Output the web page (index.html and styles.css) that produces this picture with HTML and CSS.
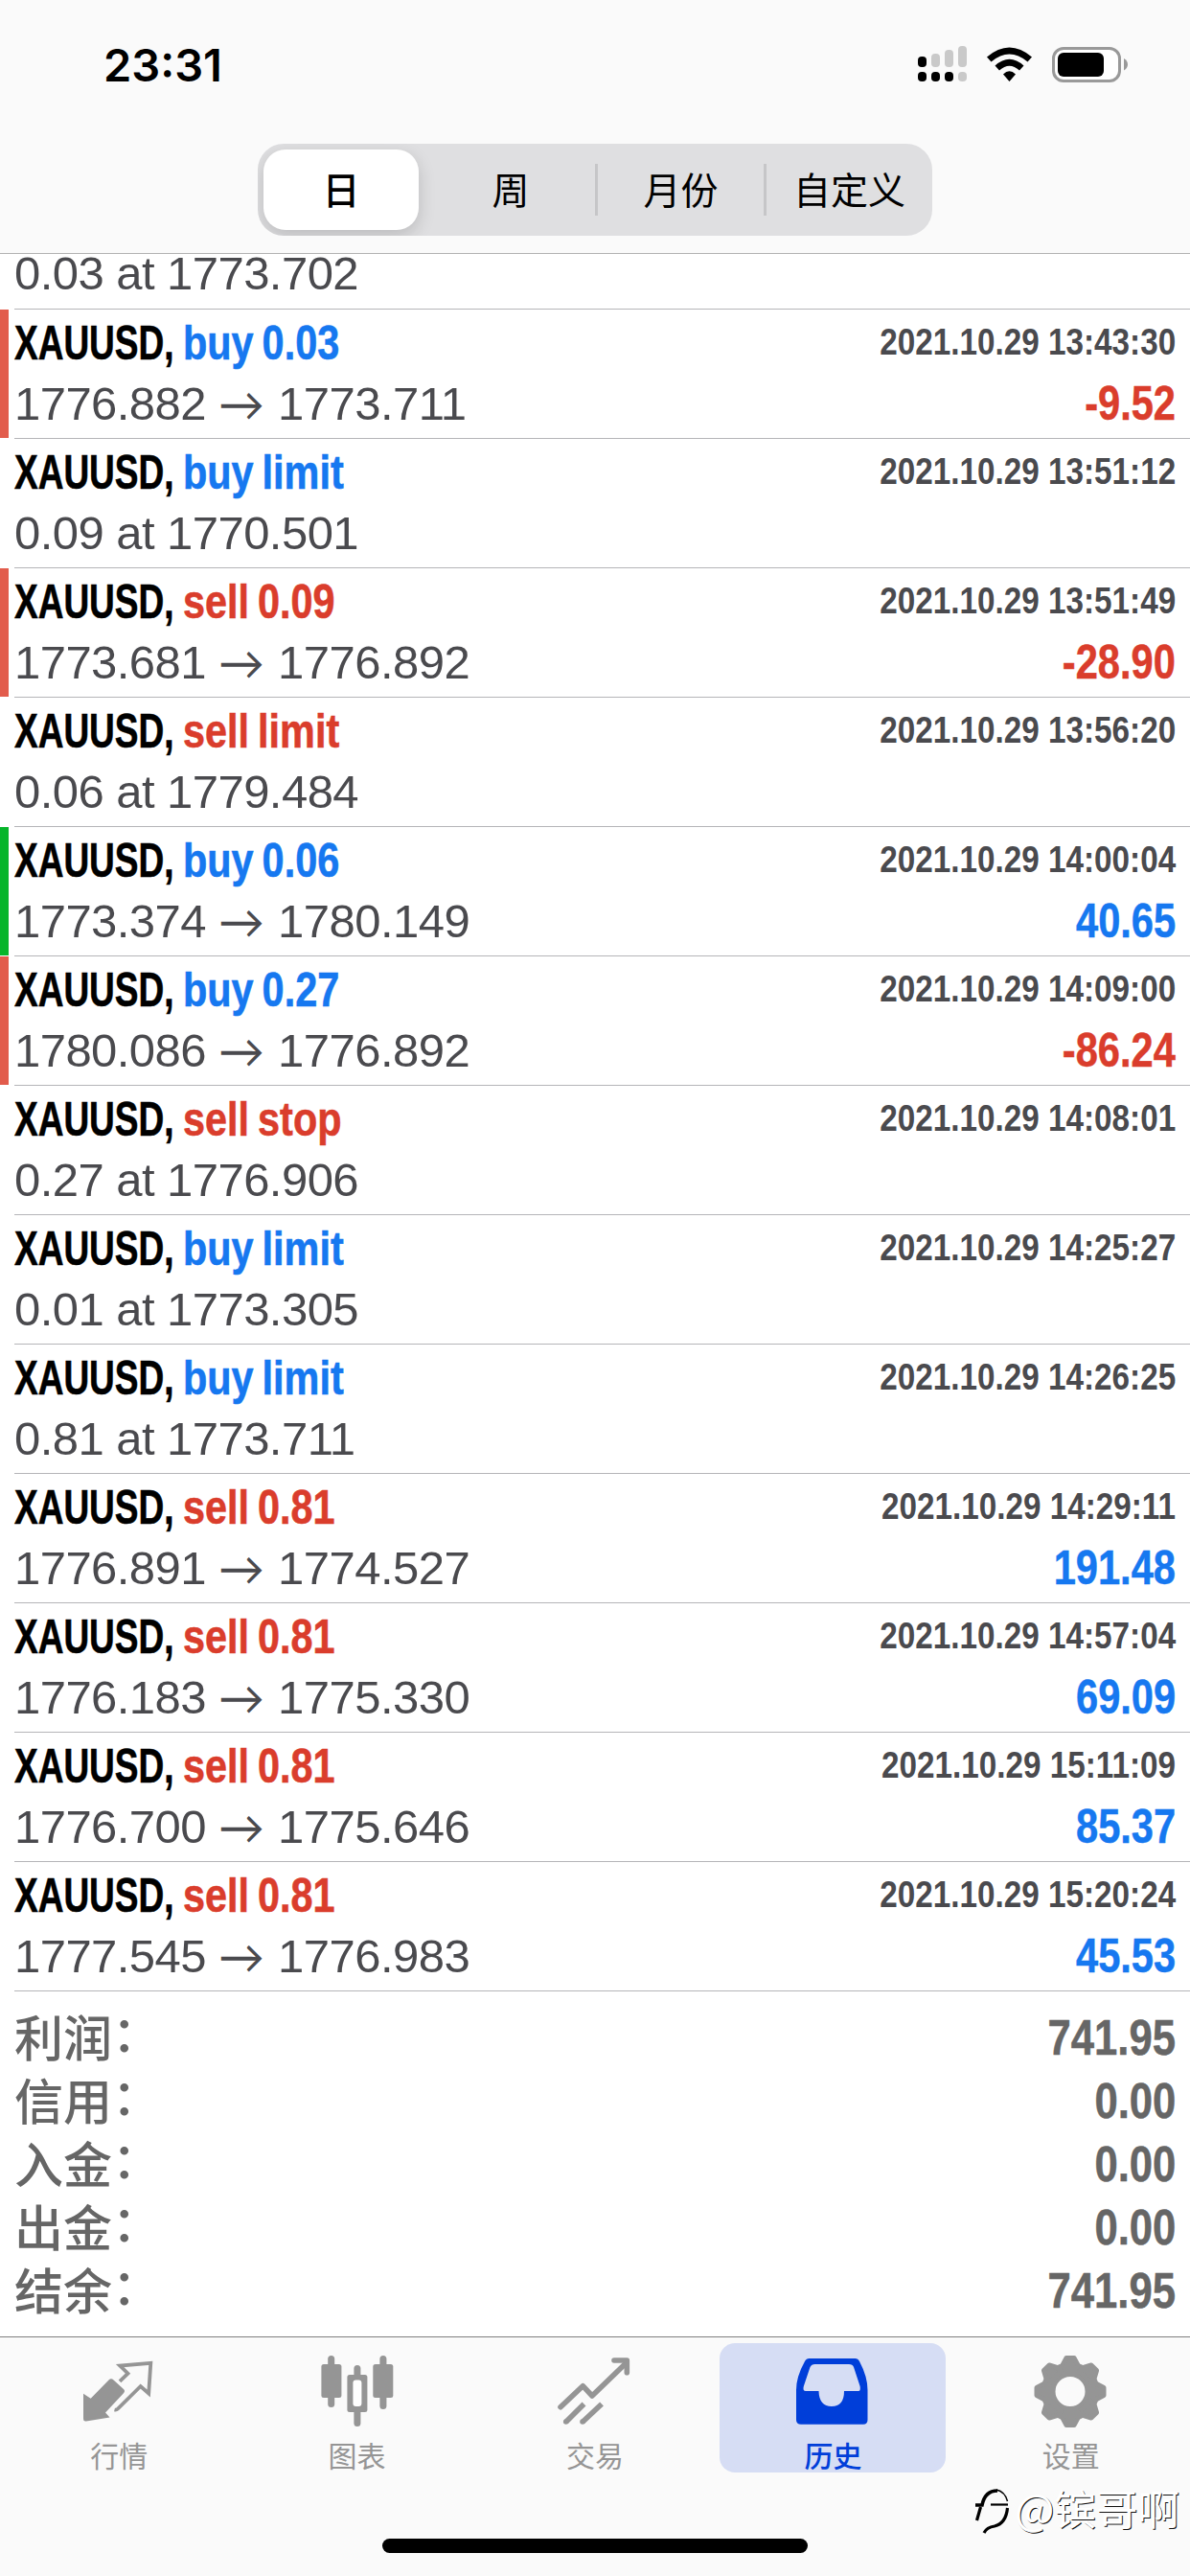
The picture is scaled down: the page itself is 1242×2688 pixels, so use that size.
FILE: index.html
```html
<!DOCTYPE html>
<html lang="zh-CN">
<head>
<meta charset="utf-8">
<title>历史</title>
<link rel="stylesheet" href="styles.css">
</head>
<body>
<div class="screen">
  <header class="header">
    <div class="status">
      <span class="clock">23:31</span>
      <svg class="status-icons" width="224" height="44" viewBox="956 45 224 44">
        <g fill="#c9c9c9">
          <rect x="972" y="56" width="9" height="14" rx="4"/>
          <rect x="986" y="52" width="9" height="18" rx="4"/>
          <rect x="1000" y="48" width="9" height="22" rx="4"/>
          <rect x="1000" y="75" width="9" height="10" rx="4"/>
        </g>
        <rect x="958" y="59" width="9" height="11" rx="4"/>
        <rect x="958" y="75" width="9" height="10" rx="4"/>
        <rect x="972" y="75" width="9" height="10" rx="4"/>
        <rect x="986" y="75" width="9" height="10" rx="4"/>
        <path d="M1030 59.500Q1053.500 39.500 1077 59.500L1072.500 64.500Q1053.500 48.500 1034.500 64.500Z"/>
        <path d="M1038.500 68.500Q1053.500 55 1068.500 68.500L1064 73.500Q1053.500 64 1043 73.500Z"/>
        <path d="M1047 77.500Q1053.500 71 1060 77.500L1053.500 85Z"/>
        <rect x="1099.500" y="50.500" width="69" height="34" rx="10.500" fill="#fff" stroke="#999" stroke-width="3"/>
        <rect x="1104" y="55" width="48" height="25" rx="6"/>
        <path d="M1173 61Q1177 63.500 1177 67.300T1173 73.500Z" fill="#999"/>
      </svg>
    </div>
    <nav class="segments">
      <span class="segment segment-on">日</span>
      <span class="segment">周</span>
      <span class="segment divided">月份</span>
      <span class="segment divided">自定义</span>
    </nav>
  </header>

  <main class="deals">
    <div class="deal clipped"><i class="mark"></i><div class="body">
      <div class="line"><span class="price">0.03 at 1773.702</span></div></div></div>
    <div class="deal"><i class="mark loss"></i><div class="body">
      <div class="line head"><b class="symbol">XAUUSD,</b><b class="side buy">buy 0.03</b><b class="time">2021.10.29 13:43:30</b></div>
      <div class="line"><span class="price">1776.882 <span class="arrow">→</span> 1773.711</span><b class="amount neg">-9.52</b></div></div></div>
    <div class="deal"><i class="mark"></i><div class="body">
      <div class="line head"><b class="symbol">XAUUSD,</b><b class="side buy">buy limit</b><b class="time">2021.10.29 13:51:12</b></div>
      <div class="line"><span class="price">0.09 at 1770.501</span></div></div></div>
    <div class="deal"><i class="mark loss"></i><div class="body">
      <div class="line head"><b class="symbol">XAUUSD,</b><b class="side sell">sell 0.09</b><b class="time">2021.10.29 13:51:49</b></div>
      <div class="line"><span class="price">1773.681 <span class="arrow">→</span> 1776.892</span><b class="amount neg">-28.90</b></div></div></div>
    <div class="deal"><i class="mark"></i><div class="body">
      <div class="line head"><b class="symbol">XAUUSD,</b><b class="side sell">sell limit</b><b class="time">2021.10.29 13:56:20</b></div>
      <div class="line"><span class="price">0.06 at 1779.484</span></div></div></div>
    <div class="deal"><i class="mark gain"></i><div class="body">
      <div class="line head"><b class="symbol">XAUUSD,</b><b class="side buy">buy 0.06</b><b class="time">2021.10.29 14:00:04</b></div>
      <div class="line"><span class="price">1773.374 <span class="arrow">→</span> 1780.149</span><b class="amount pos">40.65</b></div></div></div>
    <div class="deal"><i class="mark loss"></i><div class="body">
      <div class="line head"><b class="symbol">XAUUSD,</b><b class="side buy">buy 0.27</b><b class="time">2021.10.29 14:09:00</b></div>
      <div class="line"><span class="price">1780.086 <span class="arrow">→</span> 1776.892</span><b class="amount neg">-86.24</b></div></div></div>
    <div class="deal"><i class="mark"></i><div class="body">
      <div class="line head"><b class="symbol">XAUUSD,</b><b class="side sell">sell stop</b><b class="time">2021.10.29 14:08:01</b></div>
      <div class="line"><span class="price">0.27 at 1776.906</span></div></div></div>
    <div class="deal"><i class="mark"></i><div class="body">
      <div class="line head"><b class="symbol">XAUUSD,</b><b class="side buy">buy limit</b><b class="time">2021.10.29 14:25:27</b></div>
      <div class="line"><span class="price">0.01 at 1773.305</span></div></div></div>
    <div class="deal"><i class="mark"></i><div class="body">
      <div class="line head"><b class="symbol">XAUUSD,</b><b class="side buy">buy limit</b><b class="time">2021.10.29 14:26:25</b></div>
      <div class="line"><span class="price">0.81 at 1773.711</span></div></div></div>
    <div class="deal"><i class="mark"></i><div class="body">
      <div class="line head"><b class="symbol">XAUUSD,</b><b class="side sell">sell 0.81</b><b class="time">2021.10.29 14:29:11</b></div>
      <div class="line"><span class="price">1776.891 <span class="arrow">→</span> 1774.527</span><b class="amount pos">191.48</b></div></div></div>
    <div class="deal"><i class="mark"></i><div class="body">
      <div class="line head"><b class="symbol">XAUUSD,</b><b class="side sell">sell 0.81</b><b class="time">2021.10.29 14:57:04</b></div>
      <div class="line"><span class="price">1776.183 <span class="arrow">→</span> 1775.330</span><b class="amount pos">69.09</b></div></div></div>
    <div class="deal"><i class="mark"></i><div class="body">
      <div class="line head"><b class="symbol">XAUUSD,</b><b class="side sell">sell 0.81</b><b class="time">2021.10.29 15:11:09</b></div>
      <div class="line"><span class="price">1776.700 <span class="arrow">→</span> 1775.646</span><b class="amount pos">85.37</b></div></div></div>
    <div class="deal"><i class="mark"></i><div class="body">
      <div class="line head"><b class="symbol">XAUUSD,</b><b class="side sell">sell 0.81</b><b class="time">2021.10.29 15:20:24</b></div>
      <div class="line"><span class="price">1777.545 <span class="arrow">→</span> 1776.983</span><b class="amount pos">45.53</b></div></div></div>
  </main>

  <section class="summary">
    <div class="total"><span>利润</span><span class="colon">：</span><b class="amount">741.95</b></div>
    <div class="total"><span>信用</span><span class="colon">：</span><b class="amount">0.00</b></div>
    <div class="total"><span>入金</span><span class="colon">：</span><b class="amount">0.00</b></div>
    <div class="total"><span>出金</span><span class="colon">：</span><b class="amount">0.00</b></div>
    <div class="total"><span>结余</span><span class="colon">：</span><b class="amount">741.95</b></div>
  </section>

  <footer class="footer">
    <nav class="tabs">
      <div class="tab">
        <svg width="78" height="78" viewBox="0 0 78 78">
          <path fill="currentColor" d="M2 41.700L9.700 46.700L28.500 27.500Q31 25 33.500 27.500L44 37Q46 39 44 41.200L25 61.500L29.500 66.500L5 70.500Q2 71 2 68Z"/>
          <path fill="none" stroke="currentColor" stroke-width="3.800" d="M40 28.800L48.500 20.700L40.200 12.600L72.300 9.900L70.200 41.500L61.700 34L38 57.500Q36.500 59 34.500 58.500"/>
        </svg>
        <span>行情</span>
      </div>
      <div class="tab">
        <svg width="78" height="78" viewBox="0 0 78 78" fill="currentColor">
          <rect x="8.200" y="2" width="7" height="54" rx="3.500"/><rect x="1.400" y="11" width="21" height="35" rx="2.500"/>
          <rect x="35.400" y="12" width="7" height="64" rx="3.500"/><rect x="28.400" y="22" width="21" height="39" rx="2.500"/>
          <rect x="62.400" y="2" width="7" height="56" rx="3.500"/><rect x="55.300" y="11" width="21" height="35" rx="2.500"/>
          <rect x="34.400" y="27.500" width="9" height="27.500" rx="3" fill="#fff"/>
        </svg>
        <span>图表</span>
      </div>
      <div class="tab">
        <svg width="78" height="78" viewBox="0 0 78 78" fill="none" stroke="currentColor" stroke-width="5.600">
          <path stroke-linecap="round" stroke-linejoin="round" d="M3 55.700L26.300 33.700L36 44L72 9.300"/>
          <path stroke-linecap="round" stroke-linejoin="round" d="M59 7H72.300V19.700"/>
          <path d="M8.700 71.300L27.500 52.500M26 71.300L46 52.500"/>
          <circle cx="8.700" cy="71" r="2.800" fill="currentColor" stroke="none"/><circle cx="26" cy="71" r="2.800" fill="currentColor" stroke="none"/>
        </svg>
        <span>交易</span>
      </div>
      <div class="tab tab-on">
        <svg width="78" height="78" viewBox="-1 0 78 78">
          <path fill="currentColor" fill-rule="evenodd" d="M17 5H61.500Q64.500 5 66 8Q74.500 24 74.500 38V69Q74.500 73.700 70 73.700H5Q0 73.700 0 69V38Q0 24 9 8Q10.500 5 13.500 5ZM19.500 11Q16 11 14.500 14L7.800 34Q6.500 39 10 39H23.500Q24 55 37 55Q50 55 50 39H65Q67.500 39 66.600 34L60 14Q59 11 55 11Z"/>
        </svg>
        <span>历史</span>
      </div>
      <div class="tab">
        <svg width="78" height="78" viewBox="0 0 78 78">
          <circle cx="38" cy="39.500" r="23" fill="none" stroke="currentColor" stroke-width="15"/>
          <g fill="currentColor" stroke="currentColor" stroke-width="5" stroke-linejoin="round">
            <path id="tooth" d="M34 4.500H42L46 12V18H30V12Z"/>
            <use href="#tooth" transform="rotate(45 38 39.500)"/><use href="#tooth" transform="rotate(90 38 39.500)"/>
            <use href="#tooth" transform="rotate(135 38 39.500)"/><use href="#tooth" transform="rotate(180 38 39.500)"/>
            <use href="#tooth" transform="rotate(225 38 39.500)"/><use href="#tooth" transform="rotate(270 38 39.500)"/>
            <use href="#tooth" transform="rotate(315 38 39.500)"/>
          </g>
        </svg>
        <span>设置</span>
      </div>
    </nav>
    <div class="home-indicator"></div>
  </footer>

  <div class="watermark">
    <svg width="40" height="52" viewBox="0 0 40 52" fill="none" stroke="#000" stroke-linecap="butt">
      <path stroke-width="3.600" d="M1 19H8Q11 4 24 4"/><path stroke-width="1.500" d="M23 3Q32 5 34.500 15"/>
      <path stroke-width="2.200" d="M17 18.500H35"/>
      <path stroke-width="3.200" d="M6.500 21L2.500 35M34.500 22Q33 38 21 41Q13 42 10 48"/>
    </svg>
    <span>@镔哥啊</span>
  </div>
</div>
</body>
</html>
```
FILE: styles.css
```css
* { box-sizing: border-box; }

body {
  margin: 0;
  background: #fff;
  font-family: "Liberation Sans", "Noto Sans CJK SC", sans-serif;
}

.screen {
  position: relative;
  display: flex;
  flex-direction: column;
  width: 1242px;
  height: 2688px;
  overflow: hidden;
}

/* Status bar and period selector */
.header {
  height: 265px;
  background: #fafafa;
  border-bottom: 1px solid #b2b2b2;
}

.status {
  display: flex;
  justify-content: space-between;
  height: 150px;
  padding: 45px 62px 0 108px;
}

.clock {
  font: 600 47px/46px Inter, sans-serif;
  color: #000;
}

.segments {
  display: grid;
  grid-template-columns: repeat(4, 1fr);
  width: 704px;
  height: 96px;
  margin: 0 auto;
  background: #dfdfe1;
  border-radius: 27px;
  overflow: hidden;
}

.segment {
  display: flex;
  align-items: center;
  justify-content: center;
  height: 54px;
  margin-top: 21px;
  padding-bottom: 4px;
  font: 400 39px/50px "Noto Sans CJK SC", sans-serif;
  color: #000;
}

.segment-on {
  height: 84px;
  margin: 6px 8px 6px 6px;
  background: #fff;
  border-radius: 23px;
  box-shadow: 0 6px 18px rgba(0, 0, 0, .16);
  font-weight: 500;
}

.divided { border-left: 3px solid #c6c6c8; }

/* Deal list */
.deal {
  display: flex;
  gap: 6px;
  height: 135px;
}

.mark { width: 9px; margin-bottom: 1px; }
.loss { background: #e25c4c; }
.gain { background: #06b52a; }

.body {
  flex: 1;
  padding: 4px 15px 0 0;
  border-bottom: 1px solid #b5b5b8;
}

.clipped { height: 58px; }
.clipped .body {
  display: flex;
  flex-direction: column;
  justify-content: flex-end;
  padding-bottom: 6px;
}

.line {
  display: flex;
  height: 62px;
  line-height: 62px;
  white-space: nowrap;
}

.head {
  height: 63px;
  line-height: 63px;
}

.clipped .line { flex: none; }

.symbol, .side {
  font-size: 50px;
  transform-origin: left;
  -webkit-text-stroke: .6px currentColor;
}

.symbol {
  width: 176px;
  transform: scaleX(.74);
}

.side {
  word-spacing: -3px;
  transform: scaleX(.828);
}

.buy, .pos { color: #1678f0; }
.sell, .neg { color: #da3d2c; }

.time {
  margin-left: auto;
  font-size: 39px;
  line-height: 60px;
  color: #4a4a4e;
  transform: scaleX(.853);
  transform-origin: right;
}

.price {
  font-size: 49px;
  letter-spacing: -.55px;
  color: #4a4a4e;
}

.arrow {
  display: inline-block;
  width: 49px;
  height: 62px;
  font: 400 48px/62px Lato, sans-serif;
  letter-spacing: 0;
  vertical-align: top;
}

.amount {
  margin-left: auto;
  font-size: 50px;
  transform: scaleX(.832);
  transform-origin: right;
  -webkit-text-stroke: .5px currentColor;
}

/* Totals */
.summary {
  height: 360px;
  padding: 13px 15px 0;
  color: #666;
}

.total {
  display: flex;
  height: 66px;
  font: 500 51px/66px "Noto Sans CJK SC", sans-serif;
}

.colon { line-height: 56px; }

.total .amount {
  font-family: "Liberation Sans", sans-serif;
  font-size: 51px;
  font-weight: 700;
  line-height: 71px;
  transform: scaleX(.855);
}

/* Tab bar */
.footer {
  flex: 1;
  background: #fafafa;
  border-top: 1px solid #7f7f7f;
}

.tabs {
  display: grid;
  grid-template-columns: repeat(5, 1fr);
  justify-items: center;
  padding-top: 6px;
}

.tab {
  display: flex;
  flex-direction: column;
  align-items: center;
  gap: 12px;
  width: 236px;
  height: 135px;
  padding-top: 11px;
  border-radius: 16px;
  font: 400 30px/30px "Noto Sans CJK SC", sans-serif;
  color: #959595;
}

.tab-on {
  background: #d6ddf4;
  color: #003ed9;
}

.tab-on span { font-weight: 500; }

.home-indicator {
  width: 444px;
  height: 15px;
  margin: 69px auto 0;
  background: #000;
  border-radius: 8px;
}

/* Author stamp laid over the tab bar */
.watermark {
  position: absolute;
  right: 11px;
  bottom: 41px;
  display: flex;
  align-items: center;
  gap: 2px;
  font: 400 43.5px/60px "Noto Sans CJK SC", sans-serif;
  color: #fff;
  text-shadow: 1px 1px 0 #111;
}

.watermark svg { margin-top: 8px; }
```
